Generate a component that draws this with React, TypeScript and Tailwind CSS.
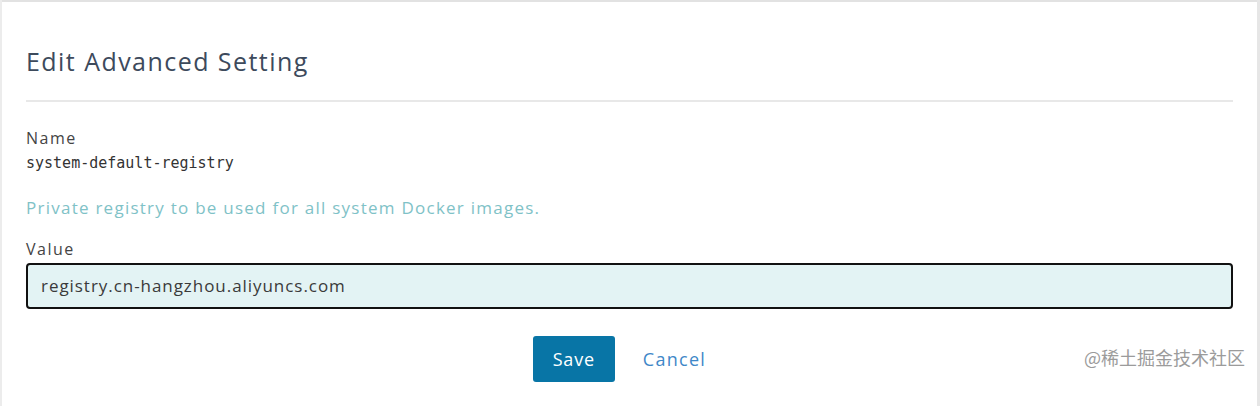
export default function App() {
  return (
    <div className="relative flex h-[406px] w-[1260px] bg-[#f2f2f2] font-['Open_Sans',sans-serif]">
      <div className="w-[2px] bg-[#ececec]" />
      <div className="flex flex-1 flex-col border-t-2 border-[#e2e2e2] bg-white px-[24px] pt-[44px]">
        <h1 className="text-[25px] leading-[31px] tracking-[1.45px] text-[#3d4a5c]">Edit Advanced Setting</h1>
        <div className="mt-[23px] h-[2px] bg-[#e8e8e8]" />

        <div className="mt-[26px] text-[16px] leading-[20px] tracking-[1.5px] text-[#444]">Name</div>
        <div className="mt-[5px] font-['DejaVu_Sans_Mono',monospace] text-[15px] leading-[20px] text-[#333]">
          system-default-registry
        </div>

        <p className="mt-[24px] text-[17px] leading-[22px] tracking-[1.25px] text-[#7fc2c7]">
          Private registry to be used for all system Docker images.
        </p>

        <div className="mt-[20px] text-[16px] leading-[20px] tracking-[1.5px] text-[#444]">Value</div>
        <div className="mt-[4px] flex h-[46px] items-center rounded-[4px] border-2 border-[#111] bg-[#e3f3f4] px-[13px] text-[17px] tracking-[0.95px] text-[#3a3a3a]">
          registry.cn-hangzhou.aliyuncs.com
        </div>

        <div className="mt-[27px] flex items-center justify-center gap-[8px]">
          <button className="h-[46px] w-[82px] rounded-[3px] bg-[#0875a6] text-[18px] font-medium tracking-[0.8px] text-white">
            Save
          </button>
          <button className="h-[46px] px-[20px] text-[18px] tracking-[1.3px] text-[#3f88c8]">Cancel</button>
        </div>
      </div>
      <div className="w-[3px] bg-[#e6e6e6]" />

      <div className="absolute right-[15px] top-[344px] font-['Noto_Sans_CJK_SC',sans-serif] text-[18px] leading-[26px] text-[#9b9b9b]">
        @稀土掘金技术社区
      </div>
    </div>
  );
}
